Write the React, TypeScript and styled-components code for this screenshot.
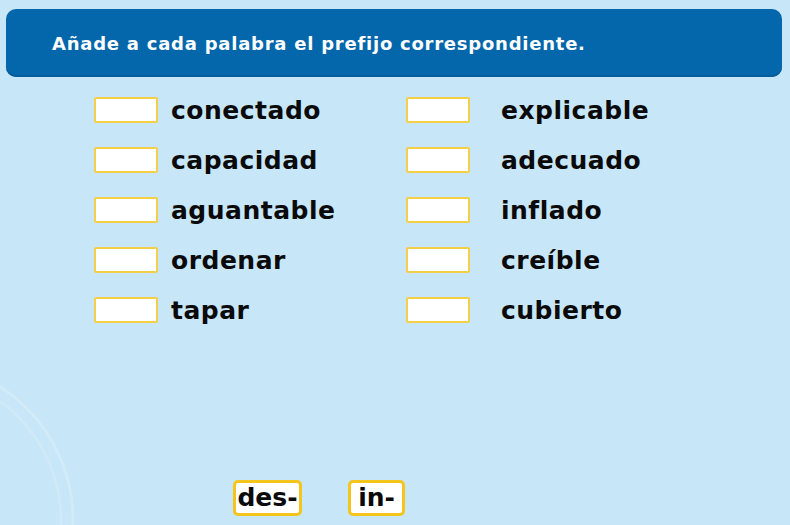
import React from "react";
import styled, { createGlobalStyle } from "styled-components";

const Global = createGlobalStyle`
  html, body { margin: 0; padding: 0; }
  body {
    background: #c7e6f7;
    font-family: "DejaVu Sans", Verdana, sans-serif;
    width: 790px;
    height: 525px;
    overflow: hidden;
  }
`;

const Page = styled.div`
  position: relative;
  width: 790px;
  height: 525px;
  box-sizing: border-box;
  padding: 9px 8px 0 6px;
  display: flex;
  flex-direction: column;
`;

const Decor = styled.svg`
  position: absolute;
  left: 0;
  top: 340px;
  pointer-events: none;
`;

const Header = styled.div`
  position: relative;
  height: 68px;
  border-radius: 10px;
  background: #0466ab;
  box-shadow: inset 0 -2px 0 #055c9b;
  display: flex;
  align-items: center;
  padding-left: 46px;
  padding-bottom: 0;
  box-sizing: border-box;
  color: #ffffff;
  font-weight: bold;
  font-size: 18px;
  letter-spacing: 0.76px;
`;

const Grid = styled.div`
  position: relative;
  margin-top: 20px;
  margin-left: 88px;
  display: grid;
  grid-template-columns: 312px 300px;
  grid-auto-rows: 50px;
`;

const Item = styled.div<{ $gap: number }>`
  display: flex;
  align-items: flex-start;
  gap: ${(p) => p.$gap}px;
`;

const Blank = styled.div`
  width: 64px;
  height: 26px;
  box-sizing: border-box;
  border: 2px solid #f6cf4a;
  border-radius: 2px;
  background: #ffffff;
  flex-shrink: 0;
`;

const Word = styled.span`
  font-size: 25px;
  font-weight: bold;
  color: #0a0a0a;
  line-height: 26px;
  letter-spacing: 0.5px;
  margin-top: 1px;
`;

const Chips = styled.div`
  position: relative;
  margin-top: auto;
  margin-bottom: 9px;
  margin-left: 227px;
  display: flex;
  gap: 46px;
`;

const Chip = styled.div<{ $w: number }>`
  width: ${(p) => p.$w}px;
  height: 36px;
  box-sizing: border-box;
  border: 3px solid #f5c51c;
  border-radius: 5px;
  background: #ffffff;
  display: flex;
  align-items: center;
  justify-content: center;
  font-size: 25px;
  font-weight: bold;
  color: #0a0a0a;
  padding-bottom: 2px;
`;

const left = ["conectado", "capacidad", "aguantable", "ordenar", "tapar"];
const right = ["explicable", "adecuado", "inflado", "creíble", "cubierto"];

export default function App() {
  return (
    <>
      <Global />
      <Page>
        <Decor width="120" height="185" viewBox="0 340 120 185">
          <circle cx="-85" cy="520" r="158" fill="none" stroke="#ffffff" strokeOpacity="0.2" strokeWidth="3" />
          <circle cx="-85" cy="520" r="146" fill="none" stroke="#ffffff" strokeOpacity="0.15" strokeWidth="3" />
        </Decor>
        <Header>Añade a cada palabra el prefijo correspondiente.</Header>
        <Grid>
          {left.map((w, i) => (
            <React.Fragment key={w}>
              <Item $gap={13}>
                <Blank />
                <Word>{w}</Word>
              </Item>
              <Item $gap={31}>
                <Blank />
                <Word>{right[i]}</Word>
              </Item>
            </React.Fragment>
          ))}
        </Grid>
        <Chips>
          <Chip $w={69}>des-</Chip>
          <Chip $w={57}>in-</Chip>
        </Chips>
      </Page>
    </>
  );
}
